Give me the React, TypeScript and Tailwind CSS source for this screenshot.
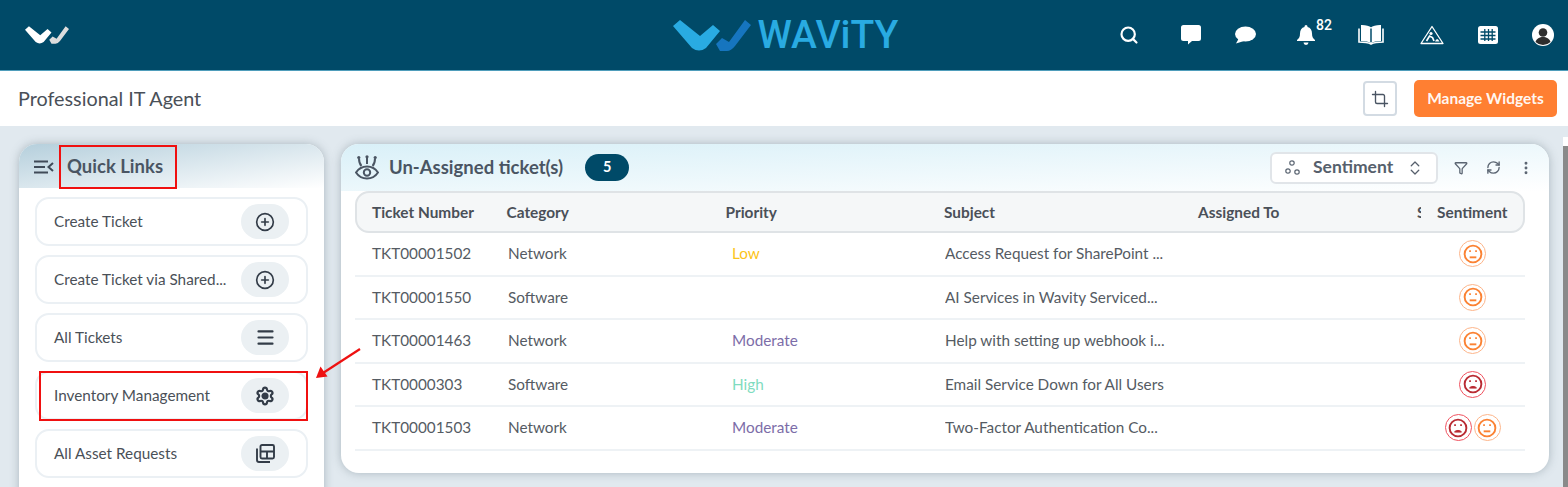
import React from "react";
import { Search, Crop, Filter, RefreshCw, EllipsisVertical, ChevronsUpDown, CirclePlus, Menu, Settings } from "lucide-react";

const lato = { fontFamily: "Lato, 'Noto Sans', sans-serif" };

function Logo({ w, h, a, b }: { w: number; h: number; a: string; b: string }) {
  return (
    <svg width={w} height={h} viewBox="0 0 78 31">
      <path d="M0 6 L7 0 L27 16 L40 5 L47 11 L33 28 Q26 33 19 28 Z" fill={a} />
      <path d="M43 24 L49 18 L56 22 L72 0 L78 5 L62 26 Q58 31 54 31 L47 31 Z" fill={b} />
    </svg>
  );
}

function Bubble() {
  return (
    <svg width="20" height="20" viewBox="0 0 20 20" fill="#fff">
      <path d="M2.5 0h15A2.5 2.5 0 0 1 20 2.500v11a2.500 2.500 0 0 1-2.500 2.500H11l-4 3.500V16H2.500A2.500 2.500 0 0 1 0 13.500v-11A2.500 2.500 0 0 1 2.500 0z" />
    </svg>
  );
}
function Oval() {
  return (
    <svg width="21" height="18" viewBox="0 0 21 18" fill="#fff">
      <ellipse cx="10.500" cy="8" rx="10.500" ry="7.500" />
      <path d="M4 12 L1 17.500 L9 15 Z" />
    </svg>
  );
}
function Bell() {
  return (
    <svg width="18" height="20" viewBox="0 0 18 20" fill="#fff">
      <path d="M9 0a1.500 1.500 0 0 1 1.500 1.500v.6C13.500 2.800 15 5.300 15 8.500c0 3.500 1 5 3 6.500v1H0v-1c2-1.500 3-3 3-6.500 0-3.200 1.500-5.700 4.500-6.400v-.6A1.500 1.500 0 0 1 9 0z" />
      <path d="M6.500 17.500h5a2.500 2.500 0 0 1-5 0z" />
    </svg>
  );
}
function Book() {
  return (
    <svg width="26" height="20" viewBox="0 0 26 20" fill="none" stroke="#fff" strokeWidth="2">
      <path d="M13 3.500C11 2 8 1 4 1v14c4 0 7 .8 9 2.200 2-1.400 5-2.200 9-2.200V1c-4 0-7 1-9 2.500z" fill="#fff" />
      <path d="M13 3.500v13.700" stroke="#004a68" strokeWidth="1.500" />
      <path d="M1 3.500V17c5 0 9 .5 12 2 3-1.500 7-2 12-2V3.500" strokeWidth="1.600" />
    </svg>
  );
}
function Road() {
  return (
    <svg width="24" height="20" viewBox="0 0 24 20" fill="none" stroke="#fff">
      <path d="M12 1.500 L23 18.500 H1 Z" strokeWidth="1.300" strokeLinejoin="round" />
      <circle cx="11" cy="8.500" r="1.600" fill="#fff" stroke="none" />
      <path d="M6.500 16 L9.500 11 L12.500 12.500 L14 16" strokeWidth="1.700" />
      <path d="M15 16.500 Q17 11.500 19.500 16.500 Z" fill="#fff" stroke="none" />
    </svg>
  );
}
function Grid() {
  return (
    <svg width="20" height="18" viewBox="0 0 20 18">
      <rect width="20" height="18" rx="2.500" fill="#fff" />
      <path d="M2.500 6h15M2.500 9.500h15M2.500 13h15M6.800 3v12M10.500 3v12M14.200 3v12" stroke="#004a68" strokeWidth="1.300" />
    </svg>
  );
}
function User() {
  return (
    <svg width="22" height="22" viewBox="0 0 22 22">
      <circle cx="11" cy="11" r="11" fill="#fff" />
      <circle cx="11" cy="8.500" r="4.300" fill="#2d2d2d" />
      <path d="M3.500 18c1-3.500 4-5 7.500-5s6.500 1.500 7.500 5a11 11 0 0 1-15 0z" fill="#2d2d2d" />
    </svg>
  );
}

function Eye() {
  return (
    <svg width="24" height="26" viewBox="0 0 24 26" fill="none" stroke="#4a5563" strokeWidth="2">
      <path d="M1 17.500C4 13 8 11.500 12 11.500s8 1.500 11 6c-3 4.500-7 6-11 6s-8-1.500-11-6z" />
      <circle cx="12" cy="17.500" r="3.200" />
      <path d="M4 3.500c0 4 1 6 2.500 7.500M12 2v7M20 3.500c0 4-1 6-2.500 7.500" />
      <circle cx="3.800" cy="2.500" r="1.600" fill="#4a5563" stroke="none" />
      <circle cx="12" cy="1.800" r="1.600" fill="#4a5563" stroke="none" />
      <circle cx="20.200" cy="2.500" r="1.600" fill="#4a5563" stroke="none" />
    </svg>
  );
}

function Neutral() {
  return (
    <span className="flex h-[27px] w-[27px] items-center justify-center rounded-full border border-[#fdb58a]">
      <svg width="20" height="20" viewBox="0 0 21 21" fill="none" stroke="#fb8233" strokeWidth="2">
        <circle cx="10.500" cy="10.500" r="8.800" />
        <path d="M7 14h7" />
        <path d="M6.500 7.500h1.800M12.800 7.500h1.800" strokeWidth="2" />
      </svg>
    </span>
  );
}
function Sad() {
  return (
    <span className="flex h-[27px] w-[27px] items-center justify-center rounded-full border border-[#f0525f]">
      <svg width="20" height="20" viewBox="0 0 21 21" fill="none" stroke="#b92b33" strokeWidth="2">
        <circle cx="10.500" cy="10.500" r="8.800" />
        <path d="M6.800 14.800c1-2.300 6.400-2.300 7.400 0z" fill="#b92b33" strokeWidth="1" />
        <path d="M6.500 7.500h1.800M12.800 7.500h1.800" strokeWidth="2" />
      </svg>
    </span>
  );
}

function AssetIcon() {
  return (
    <svg width="19" height="19" viewBox="0 0 19 19" fill="none" stroke="#333c48" strokeWidth="1.900">
      <rect x="4.500" y="1" width="13.500" height="13.500" rx="1.500" />
      <path d="M4.500 7.500h13.500M11 7.500v7" />
      <path d="M1 4.500V16a2 2 0 0 0 2 2h11" />
    </svg>
  );
}

const links: { label: string; icon: React.ReactNode }[] = [
  { label: "Create Ticket", icon: <CirclePlus size={20} strokeWidth={2} color="#333c48" /> },
  { label: "Create Ticket via Shared...", icon: <CirclePlus size={20} strokeWidth={2} color="#333c48" /> },
  { label: "All Tickets", icon: <Menu size={21} strokeWidth={2.500} color="#333c48" /> },
  {
    label: "Inventory Management",
    icon: <Settings size={20} strokeWidth={2.600} color="#333c48" className="[&>circle]:fill-[#333c48]" />,
  },
  { label: "All Asset Requests", icon: <AssetIcon /> },
];

const rows: { n: string; c: string; p: string; pc: string; s: string; faces: string[] }[] = [
  { n: "TKT00001502", c: "Network", p: "Low", pc: "text-[#fcc419]", s: "Access Request for SharePoint ...", faces: ["n"] },
  { n: "TKT00001550", c: "Software", p: "", pc: "", s: "AI Services in Wavity Serviced...", faces: ["n"] },
  { n: "TKT00001463", c: "Network", p: "Moderate", pc: "text-[#7c6da8]", s: "Help with setting up webhook i...", faces: ["n"] },
  { n: "TKT0000303", c: "Software", p: "High", pc: "text-[#7fdcc0]", s: "Email Service Down for All Users", faces: ["s"] },
  { n: "TKT00001503", c: "Network", p: "Moderate", pc: "text-[#7c6da8]", s: "Two-Factor Authentication Co...", faces: ["s", "n"] },
];

export default function App() {
  return (
    <div style={lato} className="relative flex h-[487px] w-[1568px] flex-col overflow-hidden bg-[#e1e9ef]">
      <header className="flex h-[71px] shrink-0 items-center justify-between border-b border-[#4f9dbb] bg-[#004a68]">
        <div className="ml-[25px] w-[300px]">
          <Logo w={44} h={18} a="#ffffff" b="#dddddd" />
        </div>
        <div className="ml-[127px] flex items-center gap-[7px]">
          <Logo w={78} h={31} a="#29abe2" b="#1675bf" />
          <span className="text-[39px] font-medium leading-none text-[#29abe2]" style={{ fontFamily: "Roboto, sans-serif" }}>
            WAViTY
          </span>
        </div>
        <div className="flex items-center pr-[14px]">
          <Search size={20} strokeWidth={2.600} color="#fff" className="mr-[42px]" />
          <div className="mr-[34px]"><Bubble /></div>
          <div className="mr-[41px]"><Oval /></div>
          <div className="relative mr-[43px]">
            <Bell />
            <span className="absolute left-[19px] top-[-10px] text-[14px] font-medium text-white" style={{ fontFamily: "Roboto, sans-serif" }}>82</span>
          </div>
          <div className="mr-[36px]"><Book /></div>
          <div className="mr-[34px]"><Road /></div>
          <div className="mr-[34px]"><Grid /></div>
          <User />
        </div>
      </header>

      <div className="flex h-[55px] shrink-0 items-center justify-between bg-white pl-[18px] pr-[11px]">
        <span className="text-[19.800px] text-[#4a5058]">Professional IT Agent</span>
        <div className="flex items-center gap-[17px]">
          <div className="flex h-[35px] w-[34px] items-center justify-center rounded-[4px] border-2 border-[#d3dbe3]">
            <Crop size={18} strokeWidth={1.800} color="#4a5563" />
          </div>
          <div className="flex h-[37px] w-[143px] items-center justify-center rounded-[5px] bg-[#ff7f32] text-[15.500px] font-bold text-white/95">
            Manage Widgets
          </div>
        </div>
      </div>

      <div className="flex min-h-0 flex-1 items-start gap-[17px] pl-[19px] pt-[18px]">
        <aside className="h-[400px] w-[305px] shrink-0 overflow-hidden rounded-[18px] bg-white shadow-[0_0_10px_rgba(70,90,100,0.35)]">
          <div className="relative flex h-[44px] items-center bg-gradient-to-br from-[#b5cfdc] to-[#ffffff] pl-[15px] pt-[2px]">
            <svg width="20" height="14" viewBox="0 0 20 14" fill="none" stroke="#404b58" strokeWidth="2">
              <path d="M0 1.500h14M0 7h11M0 12.500h14M19 3l-4.500 4 4.500 4" />
            </svg>
            <span className="ml-[13px] text-[18.500px] font-bold text-[#4a5563]">Quick Links</span>
            <div className="absolute left-[40px] top-[1px] h-[44px] w-[118px] border-2 border-[#f01010]" />
          </div>
          <div className="flex flex-col gap-[9px] px-[16px] pt-[9px]">
            {links.map((l) => (
              <div key={l.label} className="relative flex h-[49px] items-center justify-between rounded-[14px] border-2 border-[#ebf0f4] pl-[17px] pr-[17px]">
                <span className="text-[15.300px] text-[#4a5058]">{l.label}</span>
                <span className="flex h-[35px] w-[48px] items-center justify-center rounded-[18px] bg-[#ebf0f3]">{l.icon}</span>
                {l.label === "Inventory Management" ? (
                  <div className="absolute left-[2px] top-[-2px] h-[50px] w-[269px] border-2 border-[#f01010]" />
                ) : null}
              </div>
            ))}
          </div>
        </aside>

        <section className="h-[329px] w-[1208px] shrink-0 rounded-[18px] bg-white shadow-[0_0_10px_rgba(70,90,100,0.35)]">
          <div className="flex h-[47px] items-center rounded-t-[18px] bg-gradient-to-br from-[#d9f0f8] to-[#ffffff] pl-[14px] pr-[15px]">
            <Eye />
            <span className="ml-[10px] mt-[1px] text-[18.500px] font-bold text-[#4a5563]">Un-Assigned ticket(s)</span>
            <span className="ml-[22px] -mt-[1px] flex h-[27px] w-[44px] items-center justify-center rounded-full bg-[#004a68] text-[14.500px] font-bold text-white">5</span>
            <div className="ml-auto flex items-center">
              <div className="flex h-[32px] w-[168px] items-center rounded-[6px] border-2 border-[#e1e5e9] bg-white pl-[13px]">
                <svg width="15" height="15" viewBox="0 0 15 15" fill="none" stroke="#5b6572" strokeWidth="1.200">
                  <circle cx="7" cy="3" r="2.200" /><circle cx="3" cy="11" r="2.200" /><circle cx="12" cy="12" r="2.200" />
                </svg>
                <span className="ml-[13px] text-[17.500px] font-bold text-[#565f6c]">Sentiment</span>
                <ChevronsUpDown size={18} color="#565f6c" strokeWidth={1.700} className="ml-[13px]" />
              </div>
              <Filter size={14} color="#5b6572" strokeWidth={2.200} className="ml-[16px]" />
              <RefreshCw size={15} color="#5b6572" strokeWidth={2.200} className="ml-[18px]" />
              <EllipsisVertical size={16} color="#5b6572" strokeWidth={2.400} className="ml-[17px]" />
            </div>
          </div>

          <div className="pl-[14px] pr-[24px]">
            <div className="flex h-[42px] items-center rounded-[14px] border-2 border-[#dfe3e6] bg-[#f5f7f8] pt-[2px] text-[15.400px] font-bold text-[#4a5058]">
              <span className="ml-[15px] w-[134.500px]">Ticket Number</span>
              <span className="w-[219px]">Category</span>
              <span className="w-[218.500px]">Priority</span>
              <span className="w-[254px]">Subject</span>
              <span className="w-[219px]">Assigned To</span>
              <span className="w-[20px]"><span className="block w-[4px] overflow-hidden">S</span></span>
              <span>Sentiment</span>
            </div>
            {rows.map((r) => (
              <div key={r.n} className="flex h-[43.500px] items-center border-b-2 border-[#eef2f5] text-[15.300px] text-[#555b63]">
                <span className="ml-[17px] w-[136px]">{r.n}</span>
                <span className="w-[224px]">{r.c}</span>
                <span className={`w-[213px] ${r.pc}`}>{r.p}</span>
                <span className="w-[255px] truncate whitespace-nowrap">{r.s}</span>
                <span className="w-[220px]" />
                <span className="flex flex-1 justify-center gap-[2px]">
                  {r.faces.map((f, i) => (f === "n" ? <Neutral key={i} /> : <Sad key={i} />))}
                </span>
              </div>
            ))}
          </div>
        </section>
      </div>

      <svg className="absolute left-[314px] top-[346px]" width="48" height="36" viewBox="0 0 48 36" fill="none">
        <path d="M46 3 L9 27" stroke="#ee1111" strokeWidth="2.200" />
        <path d="M2 32 L6.500 20.500 L13.500 30.500 Z" fill="#ee1111" />
      </svg>

      <div className="absolute bottom-0 right-0 top-[137px] w-[5px] bg-white">
        <div className="mt-[9px] h-full bg-[#8a8a8a]" />
      </div>
    </div>
  );
}
